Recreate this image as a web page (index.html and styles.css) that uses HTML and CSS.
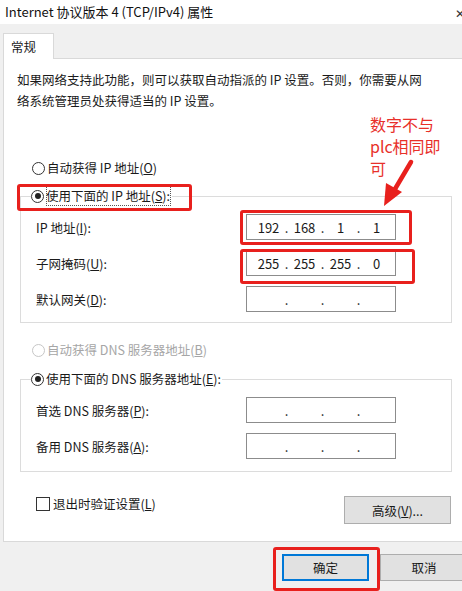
FILE: index.html
```html
<!DOCTYPE html>
<html lang="zh-CN">
<head>
    <meta charset="UTF-8">
    <meta name="viewport" content="width=device-width, initial-scale=1.0">
    <title>Internet 协议版本 4 (TCP/IPv4) 属性</title>
    <link rel="stylesheet" href="styles.css">
</head>
<body>
    <div class="titlebar">
        <span class="title">Internet 协议版本 4 (TCP/IPv4) 属性</span>
        <span class="close">✕</span>
    </div>

    <div class="window">
        <div class="tabs">
            <div class="tab">常规</div>
        </div>

        <div class="tabpage">
            <p class="desc">如果网络支持此功能，则可以获取自动指派的 IP 设置。否则，你需要从网<br>络系统管理员处获得适当的 IP 设置。</p>

            <div class="option option-first">
                <span class="radio"></span>
                <span>自动获得 IP 地址(<u>O</u>)</span>
            </div>

            <fieldset class="group">
                <legend class="option">
                    <span class="radio checked"></span>
                    <span class="focused">使用下面的 IP 地址(<u>S</u>):</span>
                </legend>
                <div class="field-row first-row">
                    <label>IP 地址(<u>I</u>):</label>
                    <div class="ipbox">
                        <span class="seg">192</span><span class="dot">.</span><span class="seg">168</span><span class="dot">.</span><span class="seg">1</span><span class="dot">.</span><span class="seg">1</span>
                    </div>
                </div>
                <div class="field-row">
                    <label>子网掩码(<u>U</u>):</label>
                    <div class="ipbox">
                        <span class="seg">255</span><span class="dot">.</span><span class="seg">255</span><span class="dot">.</span><span class="seg">255</span><span class="dot">.</span><span class="seg">0</span>
                    </div>
                </div>
                <div class="field-row">
                    <label>默认网关(<u>D</u>):</label>
                    <div class="ipbox">
                        <span class="seg"></span><span class="dot">.</span><span class="seg"></span><span class="dot">.</span><span class="seg"></span><span class="dot">.</span><span class="seg"></span>
                    </div>
                </div>
            </fieldset>

            <div class="option option-dns disabled">
                <span class="radio"></span>
                <span>自动获得 DNS 服务器地址(<u>B</u>)</span>
            </div>

            <fieldset class="group group-dns">
                <legend class="option">
                    <span class="radio checked"></span>
                    <span>使用下面的 DNS 服务器地址(<u>E</u>):</span>
                </legend>
                <div class="field-row first-row">
                    <label>首选 DNS 服务器(<u>P</u>):</label>
                    <div class="ipbox">
                        <span class="seg"></span><span class="dot">.</span><span class="seg"></span><span class="dot">.</span><span class="seg"></span><span class="dot">.</span><span class="seg"></span>
                    </div>
                </div>
                <div class="field-row">
                    <label>备用 DNS 服务器(<u>A</u>):</label>
                    <div class="ipbox">
                        <span class="seg"></span><span class="dot">.</span><span class="seg"></span><span class="dot">.</span><span class="seg"></span><span class="dot">.</span><span class="seg"></span>
                    </div>
                </div>
            </fieldset>

            <div class="bottom-row">
                <div class="option">
                    <span class="checkbox"></span>
                    <span>退出时验证设置(<u>L</u>)</span>
                </div>
                <button class="btn btn-advanced">高级(<u>V</u>)...</button>
            </div>
        </div>

        <div class="footer">
            <button class="btn btn-ok">确定</button>
            <button class="btn">取消</button>
        </div>
    </div>

    <!-- 红色标注 -->
    <div class="mark mark-legend"></div>
    <div class="mark mark-ip"></div>
    <div class="mark mark-mask"></div>
    <div class="mark mark-ok"></div>
    <div class="note">数字不与<br>plc相同即<br>可</div>
    <svg class="arrow" width="462" height="591" viewBox="0 0 462 591">
        <line x1="411" y1="162" x2="395" y2="189" stroke="#e8201d" stroke-width="4.5" stroke-linecap="round"/>
        <polygon points="384,206 386,183 402,192" fill="#e8201d"/>
    </svg>
</body>
</html>
```

FILE: styles.css
```css
body {
    margin: 0;
    width: 462px;
    height: 591px;
    overflow: hidden;
    position: relative;
    font-family: "Noto Sans CJK SC", "Microsoft YaHei", sans-serif;
    font-size: 12.5px;
    color: #1a1a1a;
    background: #f0f0f0;
}
.titlebar {
    height: 24px;
    background: #fff;
    display: flex;
    align-items: center;
    justify-content: space-between;
    padding-left: 5px;
}
.title {
    font-size: 13px;
    line-height: 20px;
    color: #111;
}
.close {
    font-size: 12px;
    margin-right: -3px;
    color: #333;
}
.window {
    background: #f0f0f0;
}
.tabs {
    padding: 9px 0 0 3px;
    display: flex;
}
.tab {
    width: 51px;
    height: 26px;
    box-sizing: border-box;
    border: 1px solid #d9d9d9;
    border-bottom: none;
    background: #fff;
    padding-left: 7px;
    line-height: 26px;
    margin-bottom: -1px;
    position: relative;
    z-index: 1;
}
.tabpage {
    margin-left: 3px;
    height: 484px;
    box-sizing: border-box;
    border: 1px solid #d9d9d9;
    border-right: none;
    background: #fff;
}
.desc {
    margin: 0;
    padding: 10px 0 0 13px;
    line-height: 21px;
    white-space: nowrap;
}
.option {
    display: flex;
    align-items: center;
    gap: 2px;
    height: 20px;
    line-height: 20px;
    white-space: nowrap;
}
.option-first {
    margin: 47px 0 0 28px;
}
.option-dns {
    margin: 17px 0 0 28px;
}
.disabled {
    color: #a6a6a6;
}
.radio {
    width: 11px;
    height: 11px;
    border: 1px solid #333;
    border-radius: 50%;
    display: inline-flex;
    align-items: center;
    justify-content: center;
}
.disabled .radio {
    border-color: #c6c6c6;
}
.radio.checked::after {
    content: "";
    width: 6px;
    height: 6px;
    border-radius: 50%;
    background: #222;
}
.checkbox {
    width: 12px;
    height: 12px;
    border: 1px solid #333;
}
.focused {
    outline: 1px dotted #555;
    outline-offset: -1px;
    padding-right: 1px;
}
.group {
    margin: 8px 0 0 16px;
    width: 432px;
    box-sizing: border-box;
    border: 1px solid #dcdcdc;
    padding: 0 0 10px 15px;
}
.group legend {
    margin-left: -5px;
    padding: 0 1px 0 0;
}
.group-dns {
    margin-top: 9px;
    padding-bottom: 12px;
}
.field-row {
    display: flex;
    align-items: center;
    height: 26px;
    margin-top: 10px;
}
.field-row.first-row {
    margin-top: 8px;
}
.field-row label {
    width: 210px;
}
.ipbox {
    width: 150px;
    height: 26px;
    box-sizing: border-box;
    border: 1px solid #8c8c8c;
    display: flex;
    align-items: center;
    padding-left: 7px;
    font-size: 13px;
}
.seg {
    width: 29px;
    text-align: center;
}
.dot {
    width: 7px;
    text-align: center;
}
.bottom-row {
    display: flex;
    justify-content: space-between;
    align-items: flex-start;
    width: 415px;
    margin-top: 22px;
    padding-left: 32px;
}
.bottom-row .option {
    gap: 3px;
}
.btn {
    font-family: inherit;
    font-size: 12.5px;
    color: #1a1a1a;
    background: #e1e1e1;
    border: 1px solid #adadad;
    width: 88px;
    height: 27px;
    padding: 0;
}
.btn-advanced {
    width: 107px;
    height: 28px;
    margin-top: 2px;
}
.btn-ok {
    width: 87px;
    border: 2px solid #0078d7;
}
.footer {
    display: flex;
    justify-content: flex-end;
    gap: 11px;
    padding-top: 12px;
    margin-right: -6px;
}
.mark {
    position: absolute;
    border: 3px solid #e8201d;
    border-radius: 3px;
    box-sizing: border-box;
}
.mark-legend {
    left: 17px;
    top: 184px;
    width: 175px;
    height: 27px;
}
.mark-ip {
    left: 240px;
    top: 210px;
    width: 172px;
    height: 35px;
}
.mark-mask {
    left: 240px;
    top: 249px;
    width: 175px;
    height: 35px;
}
.mark-ok {
    left: 273px;
    top: 547px;
    width: 107px;
    height: 44px;
}
.note {
    position: absolute;
    left: 370px;
    top: 113px;
    color: #e8302a;
    font-size: 16px;
    line-height: 22px;
    white-space: nowrap;
}
.arrow {
    position: absolute;
    left: 0;
    top: 0;
}
```
